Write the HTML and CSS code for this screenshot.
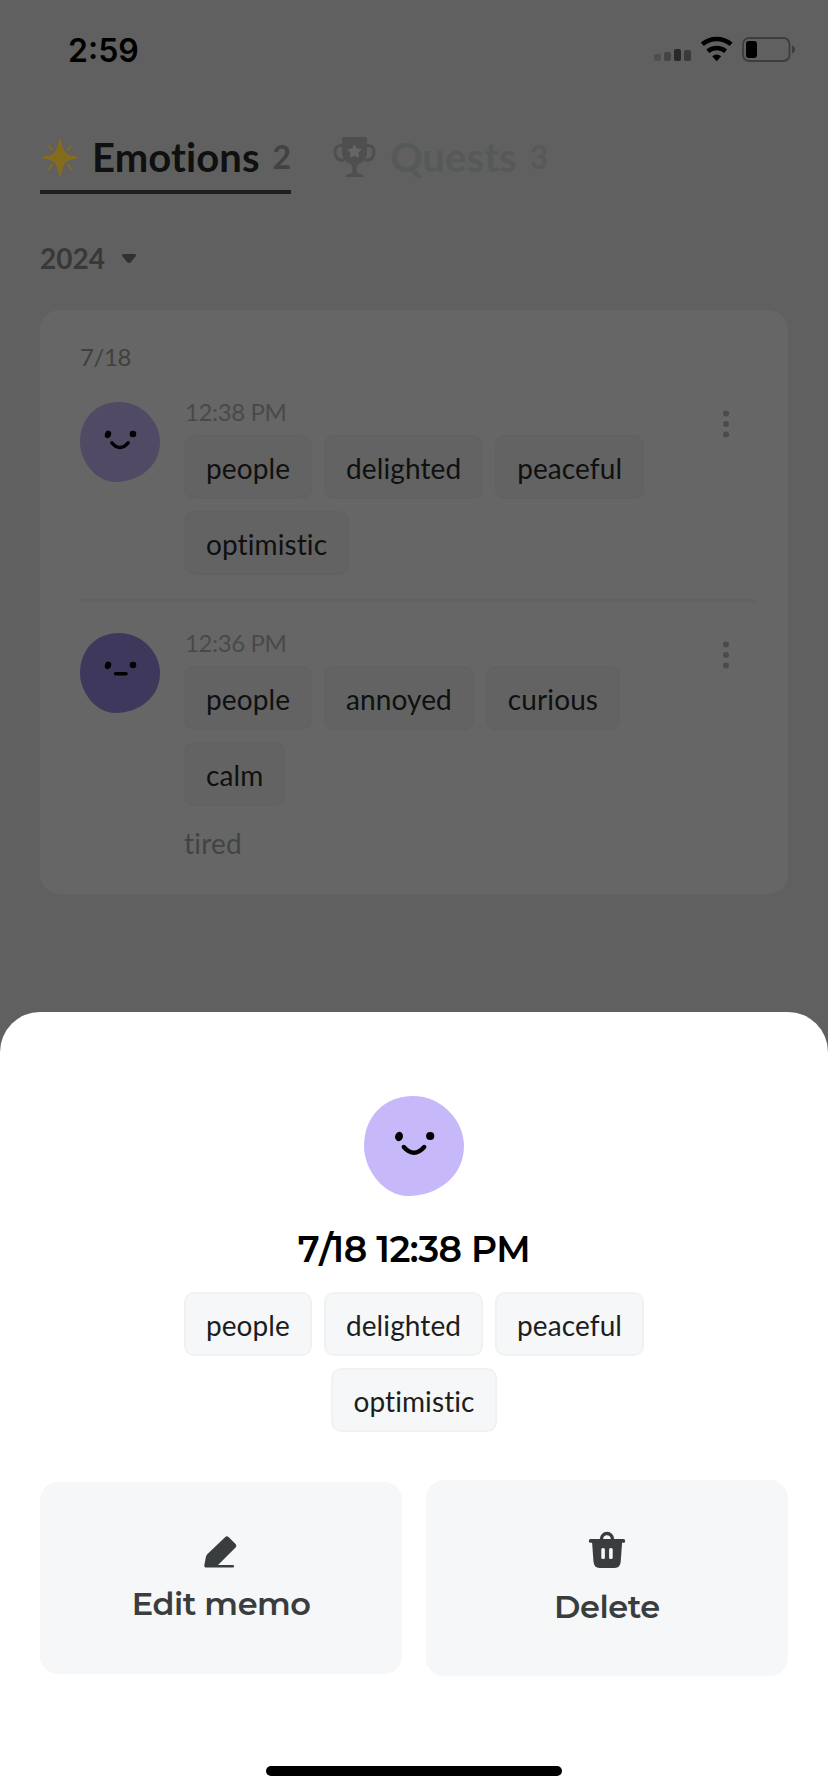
FILE: index.html
```html
<!DOCTYPE html>
<html lang="en">
<head>
<meta charset="utf-8">
<title>Emotions</title>
<link rel="stylesheet" href="styles.css">
</head>
<body>
<div class="screen">
  <header class="status">
    <span class="clock">2:59</span>
    <svg class="status-icons" width="144" height="28" viewBox="0 0 144 28">
      <rect x="1" y="18" width="7" height="7" rx="2" fill="#4e4e4e"/>
      <rect x="11" y="16" width="7" height="9" rx="2" fill="#444"/>
      <rect x="21" y="13" width="7" height="12" rx="2" fill="#292929"/>
      <rect x="31" y="14" width="7" height="11" rx="2" fill="#3a3a3a"/>
      <g fill="none" stroke="#000" stroke-width="4.6">
        <path d="M49.3 8.3a22.4 22.4 0 0 1 28.8 0"/>
        <path d="M54.8 15.2a14.2 14.2 0 0 1 17.8 0"/>
      </g>
      <path d="M59.2 20.2q4.5-3.600 9 0l-4.500 5z"/>
      <rect x="90" y="2" width="46.500" height="23" rx="6" fill="none" stroke="#3d3d3d" stroke-width="1.8"/>
      <rect x="93" y="5" width="11" height="17" rx="3"/>
      <path d="M139 9.500q3 1.200 3 4t-3 4z" fill="#3d3d3d"/>
    </svg>
  </header>

  <nav class="tabs">
    <div class="tab tab-active">
      <svg width="40" height="40" viewBox="0 0 40 40">
        <path d="M20 1q1 0 1.500 3 1.500 8.500 5 11.500 2.500 1.500 9 2.700 2.500.5 2.500 1.400t-2.500 1.400q-6.500 1.200-9 2.700-3.500 3-5 11.500-.5 3-1.500 3t-1.500-3q-1.500-8.500-5-11.500-2.500-1.500-9-2.700-2.500-.5-2.500-1.400t2.500-1.400q6.500-1.200 9-2.700 3.500-3 5-11.500.5-3 1.500-3z" fill="#856b1c"/>
        <path d="M9 8l3 3.500M31 8l-3 3.500M9 31l3-3.500M31 31l-3-3.500" stroke="#856b1c" stroke-width="2" stroke-linecap="round"/>
      </svg>
      <span class="tab-name">Emotions</span><span class="tab-count">2</span>
    </div>
    <div class="tab tab-muted">
      <svg width="44" height="44" viewBox="0 0 44 44">
        <path d="M10 2.500q0-1.500 1.500-1.500h22q1.500 0 1.500 1.500V17q0 7-6.500 10-3.800 1.500-3.800 4.500v4.500q0 1.500 3.300 2 3.500.5 4 3h-19q.5-2.500 4-3 3.300-.5 3.300-2v-4.500q0-3-3.800-4.500Q10 24 10 17z" fill="#4f4f4f"/>
        <path d="M10 9.500Q3 9 3 16q0 8.500 9 8.500M35 9.500q7-.5 7 6.500 0 8.500-9 8.500" fill="none" stroke="#4f4f4f" stroke-width="3"/>
        <path d="M22.500 9l2.200 3.700 4.200.9-2.900 3.200.5 4.300-4-1.800-4 1.800.5-4.300-2.900-3.200 4.200-.9z" fill="#666" stroke="#666" stroke-linejoin="round"/>
      </svg>
      <span class="tab-name">Quests</span><span class="tab-count">3</span>
    </div>
  </nav>

  <div class="year">2024
    <svg width="16" height="11" viewBox="0 0 16 11"><path d="M3 1h10q3 0 1.500 2.500L10 9q-2 1.800-4 0L1.500 3.500Q0 1 3 1z" fill="#303232"/></svg>
  </div>

  <main class="card">
    <div class="date">7/18</div>
    <section class="entry">
      <svg class="avatar" viewBox="0 0 100 100">
        <path d="M49 0C78 0 100 25 100 50C100 80 74 100 44 100C20 100 0 74 0 50C0 21 20 0 49 0z" fill="#514a65"/>
        <g class="face"><ellipse cx="35" cy="40.500" rx="3.900" ry="4.700" transform="rotate(18 35 40.500)"/><circle cx="66.200" cy="40" r="4.100"/><path d="M39.800 51q10.200 11.500 20.400 0"/></g>
      </svg>
      <div class="body">
        <div class="time">12:38 PM</div>
        <div class="chips"><span class="chip">people</span><span class="chip">delighted</span><span class="chip">peaceful</span><span class="chip">optimistic</span></div>
      </div>
      <svg class="more" width="8" height="28" viewBox="0 0 8 28"><circle cx="4" cy="3.500" r="3"/><circle cx="4" cy="14" r="3"/><circle cx="4" cy="24.500" r="3"/></svg>
    </section>
    <hr class="rule">
    <section class="entry">
      <svg class="avatar" viewBox="0 0 100 100">
        <path d="M49 0C78 0 100 25 100 50C100 80 74 100 44 100C20 100 0 74 0 50C0 21 20 0 49 0z" fill="#3e385c"/>
        <g class="face"><ellipse cx="35" cy="40.500" rx="3.900" ry="4.700" transform="rotate(18 35 40.500)"/><circle cx="66.200" cy="40" r="4.100"/><path d="M44.500 51h13"/></g>
      </svg>
      <div class="body">
        <div class="time">12:36 PM</div>
        <div class="chips"><span class="chip">people</span><span class="chip">annoyed</span><span class="chip">curious</span><span class="chip">calm</span></div>
        <div class="memo">tired</div>
      </div>
      <svg class="more" width="8" height="28" viewBox="0 0 8 28"><circle cx="4" cy="3.500" r="3"/><circle cx="4" cy="14" r="3"/><circle cx="4" cy="24.500" r="3"/></svg>
    </section>
  </main>

  <div class="sheet">
    <svg class="avatar avatar-large" viewBox="0 0 100 100">
      <path d="M49 0C78 0 100 25 100 50C100 80 74 100 44 100C20 100 0 74 0 50C0 21 20 0 49 0z" fill="#c7b9f9"/>
      <g class="face"><ellipse cx="35" cy="40.500" rx="3.900" ry="4.700" transform="rotate(18 35 40.500)"/><circle cx="66.200" cy="40" r="4.100"/><path d="M39.800 51q10.200 11.500 20.400 0"/></g>
    </svg>
    <h1 class="title">7<span class="slash">/</span>18 12:38 PM</h1>
    <div class="chips chips-center"><span class="chip">people</span><span class="chip">delighted</span><span class="chip">peaceful</span><span class="chip">optimistic</span></div>
    <div class="actions">
      <button class="action action-edit">
        <svg width="40" height="40" viewBox="0 0 40 40"><path d="M24.300 4.900Q25.900 3.500 27.500 4.900L34.800 12.200Q36 13.700 34.800 15.200L17 33H32Q33 33.100 33 34.300T32 35.600H5.500Q3 35.600 3.300 33.200L5 24.500Q5.400 23 6.500 22z" fill="#3a3d3e"/></svg>
        <span>Edit memo</span>
      </button>
      <button class="action action-delete">
        <svg width="40" height="40" viewBox="0 0 40 40">
          <path d="M14.500 10.500V9a5.500 5.500 0 0 1 11 0v1.500" fill="none" stroke="#3a3d3e" stroke-width="3.400"/>
          <path d="M3.500 9h33q1.700 0 1.700 1.900t-1.700 1.900h-1.400l-1.400 19q-.5 6.200-6 6.200H12.500q-5.500 0-6-6.200l-1.400-19H3.500q-1.700 0-1.700-1.900T3.500 9z" fill="#3a3d3e"/>
          <rect x="14.300" y="18" width="3.600" height="11" rx="1.500" fill="#f5f7f8"/><rect x="22.100" y="18" width="3.600" height="11" rx="1.500" fill="#f5f7f8"/>
        </svg>
        <span>Delete</span>
      </button>
    </div>
    <div class="home-bar"></div>
  </div>
</div>
</body>
</html>
```
FILE: styles.css
```css
* { box-sizing: border-box; }
body { margin: 0; }
svg { display: block; flex: none; }
.screen {
  position: relative;
  width: 828px;
  height: 1792px;
  overflow: hidden;
  background: #606060;
  font-family: Lato, sans-serif;
  font-variant-ligatures: none;
}
.status {
  display: flex;
  justify-content: space-between;
  align-items: flex-start;
  height: 128px;
  padding: 36px 31px 0 68px;
}
.clock { font: 600 32px/29px Inter, sans-serif; color: #000; }
.tabs { display: flex; gap: 42px; height: 66px; padding-left: 40px; }
.tab { display: flex; height: 66px; padding-top: 9px; white-space: nowrap; }
.tab svg { margin-top: 1px; }
.tab-active { border-bottom: 4px solid #1e1e1e; }
.tab-name { margin-left: 12px; font-weight: 700; font-size: 40px; line-height: 40px; letter-spacing: 0.1px; color: #0f1010; }
.tab-count { margin-left: 13px; font-weight: 700; font-size: 32px; line-height: 40px; color: #414343; }
.tab-muted svg { margin: -1px 0 0 -1px; }
.tab-muted .tab-name { margin-left: 14px; }
.tab-muted .tab-name, .tab-muted .tab-count { color: #565959; }
.year {
  display: flex;
  align-items: center;
  gap: 16px;
  height: 40px;
  margin: 44px 0 32px 40px;
  font-weight: 700;
  font-size: 28px;
  color: #373939;
}
.card {
  width: 748px;
  height: 584px;
  margin-left: 40px;
  padding: 33px 32px 0 40px;
  border-radius: 20px;
  background: #666;
}
.date { height: 59px; font-size: 24px; line-height: 28px; letter-spacing: -0.4px; color: #3e4040; }
.entry { display: flex; }
.avatar { width: 80px; height: 80px; }
.face path { fill: none; stroke: #000; stroke-width: 4.400px; stroke-linecap: round; }
.body { width: 481px; margin-left: 24px; }
.time { height: 33px; padding-left: 1px; font-size: 24px; line-height: 19px; letter-spacing: -0.4px; color: #474a4a; }
.chips { display: flex; flex-wrap: wrap; gap: 12px; }
.chip {
  height: 64px;
  padding: 0 20px;
  border: 2px solid #626262;
  border-radius: 10px;
  background: #636363;
  font-size: 28px;
  line-height: 62px;
  letter-spacing: 0.1px;
  color: #0f1010;
}
.more { margin: 8px 0 0 57px; fill: #4a4c4c; }
.rule { width: 676px; height: 3px; margin: 24px 0 31px; border: 0; background: #626262; }
.memo { margin-top: 19px; font-size: 28px; line-height: 36px; letter-spacing: 0.2px; color: #414444; }
.sheet {
  position: absolute;
  left: 0;
  right: 0;
  bottom: 0;
  height: 780px;
  padding: 84px 40px 0;
  display: flex;
  flex-direction: column;
  align-items: center;
  border-radius: 40px 40px 0 0;
  background: #fff;
}
.avatar-large { width: 100px; height: 100px; }
.title {
  margin: 31px 0 21px;
  font: 600 36px/44px Montserrat, Inter, sans-serif;
  letter-spacing: -0.5px;
  white-space: nowrap;
  color: #000;
}
.slash { letter-spacing: -2px; }
.chips-center { justify-content: center; width: 500px; }
.chips-center .chip { background: #f6f7f9; border-color: #f0f2f2; color: #1c1e1e; }
.actions { display: flex; align-items: center; gap: 23.5px; width: 748px; height: 196px; margin-top: 48px; }
.action {
  flex: 1;
  display: flex;
  flex-direction: column;
  align-items: center;
  height: 196px;
  padding: 50px 0 0;
  border: 0;
  border-radius: 18px;
  background: #f6f7f9;
  font: 600 32px/40px Montserrat, Inter, sans-serif;
  letter-spacing: -0.45px;
  color: #3a3d3e;
}
.action-edit { height: 192px; }
.action-edit span { margin-top: 12px; }
.action-delete span { margin-top: 17px; }
.home-bar { width: 296px; height: 10px; margin-top: 90px; border-radius: 5px; background: #000; }
```
